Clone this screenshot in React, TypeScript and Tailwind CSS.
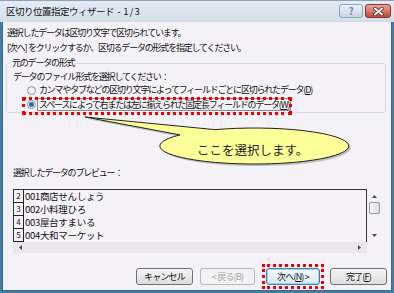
import React from 'react';

const rows = [
  { no: '2', text: '001商店せんしょう' },
  { no: '3', text: '002小料理ひろ' },
  { no: '4', text: '003屋台すまいる' },
  { no: '5', text: '004大和マーケット' },
];

const Radio = ({ checked }: { checked?: boolean }) => (
  <span className="w-[9px] h-[9px] rounded-full border border-[#8c8c8c] bg-linear-to-br from-[#e6e6e6] to-[#ffffff] flex items-center justify-center shrink-0">
    {checked && <span className="w-[5px] h-[5px] rounded-full bg-[#2b6cb0]" />}
  </span>
);

const Arrow = ({ dir }: { dir: 'up' | 'down' | 'left' | 'right' }) => {
  const pts = {
    up: '0,4 2.5,1 5,4',
    down: '0,1 2.5,4 5,1',
    left: '4,0 1,2.5 4,5',
    right: '1,0 4,2.5 1,5',
  }[dir];
  return (
    <svg width="5" height="5" viewBox="0 0 5 5">
      <polygon points={pts} fill="#4a4a4a" />
    </svg>
  );
};

const Btn = ({ children, kind }: { children: React.ReactNode; kind?: 'disabled' | 'focus' }) => {
  const base = 'h-[17px] rounded-[3px] border flex items-center justify-center text-[9px] tracking-[-0.8px] leading-none';
  if (kind === 'disabled') {
    return <div className={`${base} w-[55px] border-[#b5b9bc] bg-[#f3f3f3] text-[#a3a3a3]`}>{children}</div>;
  }
  if (kind === 'focus') {
    return (
      <div className={`${base} w-[54px] border-[#3c7fb1] bg-linear-to-b from-[#f4f9fc] to-[#d9e9f3] shadow-[inset_0_0_0_1px_#9fd8f2] text-[#111]`}>
        {children}
      </div>
    );
  }
  return (
    <div className={`${base} w-[57px] border-[#707070] bg-linear-to-b from-[#f6f6f6] to-[#dcdcdc] text-[#111]`}>
      {children}
    </div>
  );
};

export default function App() {
  return (
    <div className="w-[394px] h-[293px] flex flex-col bg-[#3a7fae] overflow-hidden font-['Noto_Sans_CJK_JP','Noto_Sans',sans-serif] text-[#111]">
      {/* Title bar */}
      <div className="h-[22px] shrink-0 flex items-start bg-linear-to-b from-[#e4ecf4] to-[#d2deea] border-t border-[#8aa2ba]">
        <div className="pl-[6px] pt-[3px] text-[9.5px] tracking-[-0.5px] leading-[14px] text-[#111] whitespace-pre">
          区切り位置指定ウィザード  -  1 / 3
        </div>
        <div className="ml-auto flex gap-[2px] pt-[3px] pr-[3px]">
          <div className="w-[24px] h-[14px] rounded-[3px] border border-[#8ea3b8] bg-linear-to-b from-[#eef3f8] to-[#c5d4e3] flex items-center justify-center text-[10px] font-bold leading-none text-[#6d8aa6]">
            ?
          </div>
          <div className="w-[26px] h-[14px] rounded-[3px] border border-[#7d3b33] bg-linear-to-b from-[#e9a497] to-[#c4463a] flex items-center justify-center">
            <svg width="11" height="9" viewBox="0 0 11 9">
              <path d="M2 1.5 L9 7.5 M9 1.5 L2 7.5" stroke="#4a1d18" strokeWidth="3.4" strokeLinecap="round" />
              <path d="M2 1.5 L9 7.5 M9 1.5 L2 7.5" stroke="#ffffff" strokeWidth="2" strokeLinecap="round" />
            </svg>
          </div>
        </div>
      </div>

      {/* Client area */}
      <div className="relative flex-1 mx-[2px] mb-[2px] bg-[#f4f2f6] border-l border-r border-b border-[#4b6478] flex flex-col">
        <div className="ml-[4px] pt-[3px] text-[9px] tracking-[-1.2px] leading-[15px] whitespace-pre">
          <div>選択したデータは区切り文字で区切られています。</div>
          <div>[次へ]  をクリックするか、区切るデータの形式を指定してください。</div>
        </div>

        <fieldset className="ml-[3px] mt-[2px] w-[380px] border border-[#d3dde4] rounded-[3px] pl-[4px] pb-[1px] text-[9px] tracking-[-1.2px]">
          <legend className="px-[1px] leading-[12px]">元のデータの形式</legend>
          <div className="ml-[2px] mt-[1px] leading-[13px]">データのファイル形式を選択してください：</div>
          <div className="ml-[16px] h-[14px] flex items-center">
            <Radio />
            <span className="ml-[2px] leading-[12px] pl-[1px]">
              カンマやタブなどの区切り文字によってフィールドごとに区切られたデータ(<span className="underline">D</span>)
            </span>
          </div>
          <div className="relative ml-[16px] h-[14px] flex items-center">
            <Radio checked />
            <span className="ml-[1px] leading-[11px] px-[1px] border border-[#8a8a8a]">
              スペースによって右または左に揃えられた固定長フィールドのデータ(<span className="underline">W</span>)
            </span>
            <div className="absolute left-[-5px] top-0 w-[270px] h-[18px] border-[3px] border-dotted border-[#ee0000]" />
          </div>
        </fieldset>

        <div className="ml-[10px] mt-[53px] text-[9px] tracking-[-1.2px] leading-[13px]">
          選択したデータのプレビュー：
        </div>

        {/* Preview */}
        <div className="ml-[10px] mt-[10px] flex">
          <div className="w-[354px] flex flex-col">
            <div className="border-t border-l border-r border-[#333]">
              {rows.map((r) => (
                <div key={r.no} className="h-[13px] flex items-center">
                  <div className="w-[10px] h-[13px] border-r border-b border-[#222] text-[8px] leading-[12px] text-center">
                    {r.no}
                  </div>
                  <div className="ml-[1px] text-[9.5px] tracking-[-0.3px] leading-[13px]">{r.text}</div>
                </div>
              ))}
            </div>
            <div className="h-[11px] bg-[#e9e7ec] flex items-center justify-between px-[5px]">
              <Arrow dir="left" />
              <Arrow dir="right" />
            </div>
          </div>
          <div className="w-[14px] h-[53px] flex flex-col items-center pt-[5px]">
            <Arrow dir="up" />
            <div className="mt-[3px] w-[11px] h-[12px] rounded-[2px] border border-[#9a9a9a] bg-linear-to-r from-[#f7f7f7] to-[#dedede]" />
            <div className="mt-auto mb-[4px]">
              <Arrow dir="down" />
            </div>
          </div>
        </div>

        {/* Buttons */}
        <div className="mt-[15px] flex justify-end pr-[4px]">
          <Btn>キャンセル</Btn>
          <div className="ml-[7px]">
            <Btn kind="disabled">&lt; 戻る(B)</Btn>
          </div>
          <div className="relative ml-[11px]">
            <Btn kind="focus">
              次へ(<span className="underline">N</span>) &gt;
            </Btn>
            <div className="absolute left-[-4px] right-[-4px] top-[-4px] bottom-[-4px] border-[3px] border-dotted border-[#ee0000]" />
          </div>
          <div className="ml-[10px]">
            <Btn>
              完了(<span className="underline">F</span>)
            </Btn>
          </div>
        </div>

        {/* Callout */}
        <svg className="absolute left-0 top-0 pointer-events-none" width="389" height="268" viewBox="0 0 389 268">
          <path
            d="M82 95 L177 112.9 A94.5 18 0 1 0 212 107.65 Z"
            fill="#000"
            opacity="0.22"
            transform="translate(2 2)"
          />
          <path d="M82 95 L177 112.9 A94.5 18 0 1 0 212 107.65 Z" fill="#ffff99" stroke="#222" strokeWidth="1" />
          <text
            x="194"
            y="132.5"
            fontSize="12.5"
            fill="#222"
            fontFamily="'Noto Sans CJK JP', sans-serif"
          >
            ここを選択します。
          </text>
        </svg>
      </div>
    </div>
  );
}
